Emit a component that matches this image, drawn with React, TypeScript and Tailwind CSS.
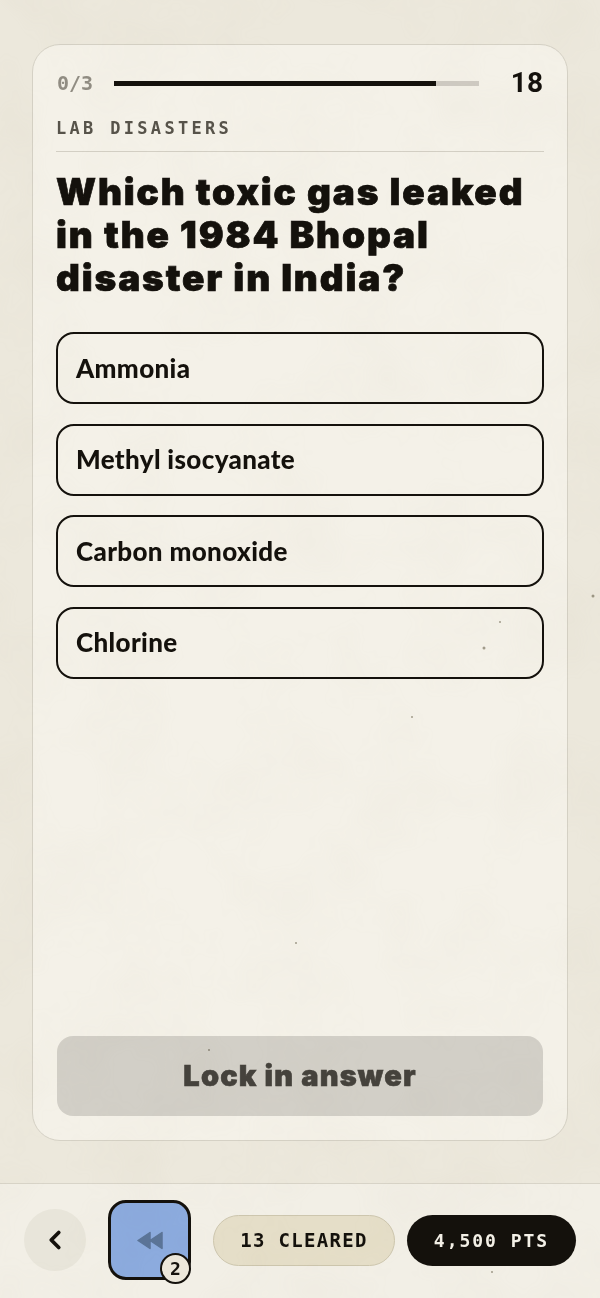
import { ChevronLeft } from "lucide-react";

const options = ["Ammonia", "Methyl isocyanate", "Carbon monoxide", "Chlorine"];

const mono = "font-['DejaVu_Sans_Mono',monospace]";
const heavy = "font-['Inter',sans-serif] font-black";

const specks = [
  [500, 622, 2],
  [484, 648, 3],
  [412, 717, 2],
  [296, 943, 2],
  [209, 1050, 2],
  [593, 596, 3],
  [492, 1272, 2],
];

export default function App() {
  return (
    <div className="relative flex h-[1298px] w-[600px] flex-col overflow-hidden bg-[#ece8dc] text-[#14110c]">
      <main className="flex min-h-0 flex-1 flex-col px-8 pt-11 pb-[42px]">
        <section className="flex flex-1 flex-col rounded-[28px] border border-[#d5d1c5] bg-[#f4f1e8] px-[23px] pt-[24px] pb-[24px]">
          <div className="flex h-[28px] items-center">
            <span className={`${mono} w-[58px] pl-[1px] text-[20px] font-bold text-[#918d83]`}>0/3</span>
            <div className="h-[5px] w-[365px] bg-[#cfcbc3]">
              <div className="h-full w-[322px] bg-[#14110c]" />
            </div>
            <span className="ml-auto pr-[1px] font-['Roboto',sans-serif] text-[28px] font-bold">18</span>
          </div>
          <div className="border-b border-[#d3cfc4] pt-[18px] pb-[10px]">
            <p className={`${mono} text-[17px] leading-[26px] font-bold tracking-[0.195em] text-[#57534a]`}>LAB DISASTERS</p>
          </div>
          <h1 className={`${heavy} mt-[18px] text-[37px] leading-[43px] tracking-[0.05em] [-webkit-text-stroke:0.7px_#14110c]`}>
            Which toxic gas leaked in the 1984 Bhopal disaster in India?
          </h1>
          <div className="mt-[33px] flex flex-col gap-[19.67px]">
            {options.map((option) => (
              <button
                key={option}
                type="button"
                className="flex h-[72px] items-center rounded-[18px] border-2 border-[#14110c] px-[18px] font-['Lato',sans-serif] text-[26px] font-black tracking-[0.35px]"
              >
                {option}
              </button>
            ))}
          </div>
          <button
            type="button"
            className={`${heavy} mx-[1px] mt-auto h-[80px] rounded-[16px] bg-[#d2cfc7] text-[29px] tracking-[0.04em] text-[#45423c] [-webkit-text-stroke:0.6px_#45423c]`}
          >
            Lock in answer
          </button>
        </section>
      </main>
      <footer className="flex h-[115px] items-center border-t border-[#d8d4c8] bg-[#f2efe6] pb-[2px] pl-[24px]">
        <button type="button" className="flex h-[62px] w-[62px] items-center justify-center rounded-full bg-[#e8e5da]">
          <ChevronLeft size={30} strokeWidth={3} />
        </button>
        <div className="relative ml-[22px] flex h-[80px] w-[83px] items-center justify-center rounded-[18px] border-[3px] border-[#14110c] bg-[#8cabde]">
          <svg width="26" height="19" viewBox="0 0 26 19" fill="#5b7498" stroke="#5b7498" strokeWidth="1.5" strokeLinejoin="round">
            <path d="M13 1.5v16L1 9.5zM25 1.5v16L13 9.5z" />
          </svg>
          <span className={`${mono} absolute -right-[3px] -bottom-[7px] flex h-[31px] w-[31px] items-center justify-center rounded-full border-2 border-[#14110c] bg-[#ece7da] text-[18px] font-bold`}>2</span>
        </div>
        <div className={`${mono} ml-[22px] flex h-[51px] w-[182px] items-center justify-center rounded-full border border-[#cdc6ae] bg-[#e5dec8] text-[19px] font-bold tracking-[0.07em]`}>
          13 CLEARED
        </div>
        <div className={`${mono} ml-[12px] flex h-[51px] w-[169px] items-center justify-center rounded-full bg-[#14110c] text-[18px] font-bold tracking-[0.11em] text-[#f4f1e8]`}>
          4,500 PTS
        </div>
      </footer>
      {/* paper grain over the whole page */}
      <svg className="pointer-events-none absolute inset-0 mix-blend-multiply" width="600" height="1298">
        <filter id="grain">
          <feTurbulence type="fractalNoise" baseFrequency="0.012" numOctaves="4" seed="7" />
          <feColorMatrix values="0 0 0 0 0.55  0 0 0 0 0.5  0 0 0 0 0.4  0 0 0 0.55 -0.2" />
        </filter>
        <rect width="600" height="1298" filter="url(#grain)" opacity="0.15" />
        {specks.map(([x, y, r]) => (
          <circle key={`${x}-${y}`} cx={x} cy={y} r={r / 2} fill="#a8a498" />
        ))}
      </svg>
    </div>
  );
}
